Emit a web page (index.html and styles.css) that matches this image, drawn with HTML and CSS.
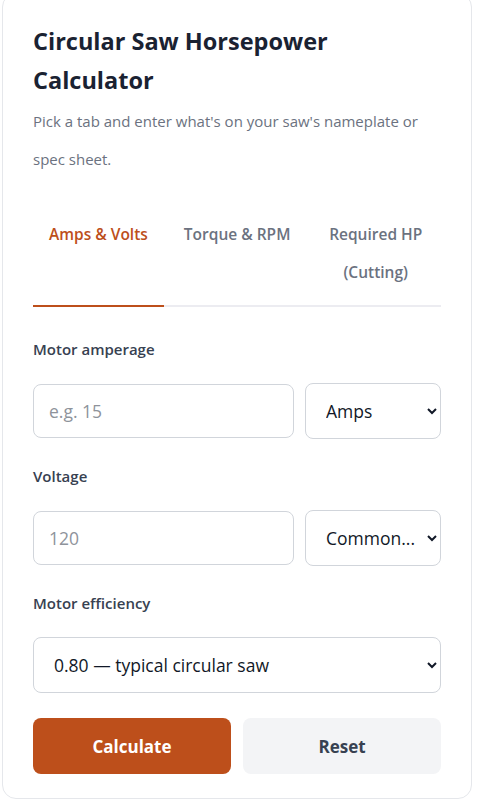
FILE: index.html
```html
<!DOCTYPE html>
<html>
<head>
  <meta charset="utf-8">
  <link rel="stylesheet" href="styles.css">
</head>
<body>
  <div class="card">
    <h1 class="title">Circular Saw Horsepower Calculator</h1>
    <p class="intro">Pick a tab and enter what's on your saw's nameplate or spec sheet.</p>

    <!-- Tabs -->
    <div class="tabs">
      <div class="tab active">Amps &amp; Volts</div>
      <div class="tab">Torque &amp; RPM</div>
      <div class="tab tab-wide">Required HP (Cutting)</div>
    </div>

    <!-- Amps & Volts form -->
    <div class="field first">
      <label class="label" for="amps">Motor amperage</label>
      <div class="row">
        <input class="input" id="amps" type="text" placeholder="e.g. 15">
        <select class="select">
          <option>Amps</option>
          <option>Milliamps</option>
        </select>
      </div>
    </div>

    <div class="field">
      <label class="label" for="volts">Voltage</label>
      <div class="row">
        <input class="input" id="volts" type="text" placeholder="120">
        <select class="select">
          <option>Common...</option>
          <option>120 V</option>
          <option>230 V</option>
        </select>
      </div>
    </div>

    <div class="field">
      <label class="label" for="eff">Motor efficiency</label>
      <select class="select select-full" id="eff">
        <option>0.80 — typical circular saw</option>
        <option>0.70 — older brushed motor</option>
        <option>0.90 — brushless motor</option>
      </select>
    </div>

    <div class="actions">
      <button class="btn btn-primary">Calculate</button>
      <button class="btn btn-secondary">Reset</button>
    </div>
  </div>
</body>
</html>
```

FILE: styles.css
```css
* {
  margin: 0;
  padding: 0;
  box-sizing: border-box;
}

body {
  background: #fff;
  font-family: "Open Sans", "Noto Sans", sans-serif;
  color: #1f2937;
}

.card {
  width: 470px;
  margin: -7px 0 0 2px;
  padding: 28px 30px 24px;
  background: #fff;
  border: 1px solid #e5e7eb;
  border-radius: 14px;
}

.title {
  font-size: 23.5px;
  font-weight: 700;
  line-height: 39px;
  color: #1a2232;
  margin-bottom: 2px;
}

.intro {
  font-size: 15px;
  line-height: 38px;
  color: #6b7280;
}

/* Tabs */
.tabs {
  display: flex;
  gap: 4px;
  margin-top: 23px;
  border-bottom: 2px solid #ececf1;
}

.tab {
  flex: none;
  padding: 14px 16px;
  margin-bottom: -2px;
  border-bottom: 2px solid transparent;
  font-size: 15.5px;
  font-weight: 600;
  line-height: 38px;
  color: #6b7280;
  text-align: center;
  cursor: pointer;
}

.tab-wide {
  flex: 1;
}

.tab.active {
  color: #bd4f1b;
  border-bottom-color: #bd4f1b;
}

/* Fields */
.field {
  margin-top: 27px;
}

.field.first {
  margin-top: 32px;
}

.label {
  display: block;
  font-size: 15px;
  font-weight: 600;
  line-height: 20px;
  color: #374151;
  margin-bottom: 24px;
}

.row {
  display: grid;
  grid-template-columns: 1fr 136px;
  gap: 11px;
  align-items: center;
}

.input,
.select {
  font-family: inherit;
  font-size: 17.5px;
  color: #111827;
  background: #fff;
  border: 1px solid #d1d5db;
  border-radius: 8px;
}

.input {
  height: 54px;
  padding: 0 15px;
  outline: none;
}

.input::placeholder {
  color: #8e939b;
}

.select {
  height: 56px;
  padding: 0 4px 0 16px;
}

.select-full {
  width: 100%;
}

/* Buttons */
.actions {
  display: grid;
  grid-template-columns: 1fr 1fr;
  gap: 12px;
  margin-top: 25px;
}

.btn {
  height: 56px;
  border: none;
  border-radius: 8px;
  font-family: inherit;
  font-size: 17px;
  font-weight: 700;
  cursor: pointer;
}

.btn-primary {
  background: #bd4f1b;
  color: #fff;
}

.btn-secondary {
  background: #f3f4f6;
  color: #374151;
}
```
